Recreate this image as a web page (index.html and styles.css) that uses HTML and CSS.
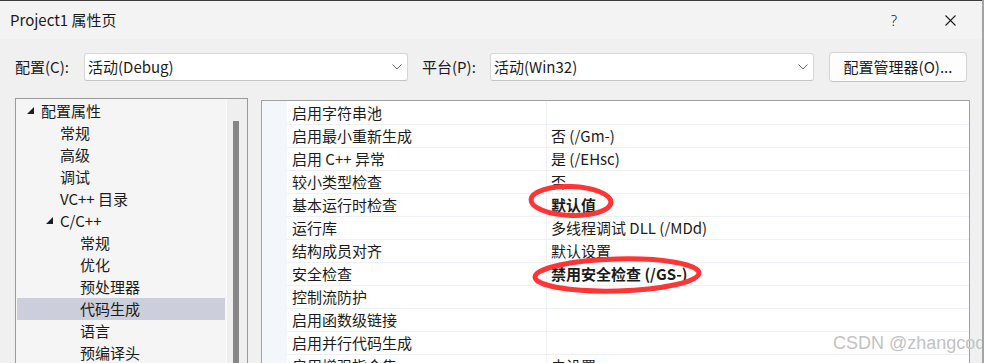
FILE: index.html
```html
<html lang="zh-CN">
<head>
<meta charset="utf-8"/>
<title>Project1 属性页</title>
<link rel="stylesheet" href="styles.css">
</head>
<body>
<div class="window">
  <div class="topline"></div>

  <div class="titlebar">
    <span class="title">Project1 属性页</span>
    <span class="help">?</span>
    <svg class="close" width="11" height="11" viewBox="0 0 11 11"><path d="M0.5 0.5 L10.5 10.5 M10.5 0.5 L0.5 10.5" stroke="#1e1e1e" stroke-width="1.1" fill="none"/></svg>
  </div>

  <div class="config">
    <label class="cfg-label">配置(C):</label>
    <div class="combo">
      <span>活动(Debug)</span>
      <svg class="chevron" width="10" height="6" viewBox="0 0 10 6"><path d="M0.5 0.5 L5 5 L9.5 0.5" stroke="#6a6a6a" stroke-width="1" fill="none"/></svg>
    </div>
    <label class="cfg-label plat">平台(P):</label>
    <div class="combo">
      <span>活动(Win32)</span>
      <svg class="chevron" width="10" height="6" viewBox="0 0 10 6"><path d="M0.5 0.5 L5 5 L9.5 0.5" stroke="#6a6a6a" stroke-width="1" fill="none"/></svg>
    </div>
    <button class="manager">配置管理器(O)...</button>
  </div>

  <div class="main">
    <div class="tree-panel">
      <div class="tree">
        <div class="node lv0"><svg class="tri" width="7" height="7" viewBox="0 0 7 7"><polygon points="7,0 7,7 0,7" fill="#1e1e1e"/></svg>配置属性</div>
        <div class="node lv1">常规</div>
        <div class="node lv1">高级</div>
        <div class="node lv1">调试</div>
        <div class="node lv1">VC++ 目录</div>
        <div class="node lv1 open"><svg class="tri" width="7" height="7" viewBox="0 0 7 7"><polygon points="7,0 7,7 0,7" fill="#1e1e1e"/></svg>C/C++</div>
        <div class="node lv2">常规</div>
        <div class="node lv2">优化</div>
        <div class="node lv2">预处理器</div>
        <div class="node lv2 selected">代码生成</div>
        <div class="node lv2">语言</div>
        <div class="node lv2">预编译头</div>
      </div>
      <div class="scrollbar"><div class="thumb"></div></div>
    </div>

    <div class="grid-panel">
      <div class="gutter"></div>
      <div class="props">
        <div class="row"><div class="name">启用字符串池</div><div class="value"></div></div>
        <div class="row"><div class="name">启用最小重新生成</div><div class="value">否 (/Gm-)</div></div>
        <div class="row"><div class="name">启用 C++ 异常</div><div class="value">是 (/EHsc)</div></div>
        <div class="row"><div class="name">较小类型检查</div><div class="value">否</div></div>
        <div class="row"><div class="name">基本运行时检查</div><div class="value bold">默认值</div></div>
        <div class="row"><div class="name">运行库</div><div class="value">多线程调试 DLL (/MDd)</div></div>
        <div class="row"><div class="name">结构成员对齐</div><div class="value">默认设置</div></div>
        <div class="row"><div class="name">安全检查</div><div class="value bold">禁用安全检查 (/GS-)</div></div>
        <div class="row"><div class="name">控制流防护</div><div class="value"></div></div>
        <div class="row"><div class="name">启用函数级链接</div><div class="value"></div></div>
        <div class="row"><div class="name">启用并行代码生成</div><div class="value"></div></div>
        <div class="row"><div class="name">启用增强指令集</div><div class="value">未设置</div></div>
      </div>
    </div>
  </div>

  <!-- hand-drawn annotation marks -->
  <svg class="marks" width="984" height="363" viewBox="0 0 984 363">
    <ellipse cx="571" cy="201" rx="40" ry="14.5" transform="rotate(2 571 201)" fill="none" stroke="#ff3434" stroke-width="5"/>
    <ellipse cx="617" cy="275" rx="82" ry="16" transform="rotate(-1.5 617 275)" fill="none" stroke="#ff3434" stroke-width="5"/>
  </svg>

  <div class="watermark">CSDN @zhangcod</div>
</div>
</body>
</html>
```

FILE: styles.css
```css
body {
  margin: 0;
  font: 15px "Noto Sans CJK SC", "Noto Sans", sans-serif;
  color: #1b1b1b;
  background: #f0f0f0;
}
.window {
  position: relative;
  width: 984px;
  height: 363px;
  overflow: hidden;
  box-sizing: border-box;
  border-right: 2px solid #a4a4a4;
  background: #f0f0f0;
}
.topline {
  height: 1px;
  background: #3b3b3b;
}
.titlebar {
  height: 38px;
  display: flex;
  align-items: center;
  padding-left: 10px;
  background: #f3f3f3;
}
.title {
  line-height: 20px;
}
.help {
  margin-left: auto;
  width: 14px;
  text-align: center;
  font-family: "Noto Sans", sans-serif;
  font-weight: 300;
  line-height: 20px;
}
.close {
  margin-left: 44px;
  margin-right: 26px;
}

/* configuration row */
.config {
  margin-top: 13px;
  height: 30px;
  display: flex;
  align-items: center;
  padding-left: 15px;
}
.cfg-label {
  width: 69px;
  line-height: 20px;
}
.cfg-label.plat {
  margin-left: 14px;
  width: 68px;
}
.combo {
  width: 324px;
  height: 28px;
  box-sizing: border-box;
  display: flex;
  align-items: center;
  padding-left: 3px;
  background: #fff;
  border: 1px solid #d6d6d6;
  border-bottom-color: #c4c4c4;
  border-radius: 3px;
  line-height: 20px;
}
.chevron {
  margin-left: auto;
  margin-right: 5px;
}
.manager {
  margin-left: 15px;
  width: 138px;
  height: 30px;
  font: inherit;
  color: inherit;
  line-height: 20px;
  background: #fdfdfd;
  border: 1px solid #d3d3d3;
  border-bottom-color: #c2c2c2;
  border-radius: 4px;
  padding: 0;
}

/* tree and property grid */
.main {
  margin-top: 16px;
  display: flex;
  align-items: flex-start;
  padding-left: 15px;
}
.tree-panel {
  width: 233px;
  height: 300px;
  box-sizing: border-box;
  border: 1px solid #9a9a9a;
  background: #f5f5f5;
  display: flex;
}
.tree {
  width: 210px;
  padding: 1px 1px 0 1px;
  box-sizing: border-box;
}
.node {
  height: 22px;
  line-height: 22px;
  display: flex;
  align-items: center;
  white-space: nowrap;
}
.node .tri {
  margin-top: -2px;
}
.lv0 {
  padding-left: 10px;
}
.lv0 .tri {
  margin-right: 7px;
}
.lv1 {
  padding-left: 43px;
}
.lv1.open {
  padding-left: 29px;
}
.lv1.open .tri {
  margin-right: 7px;
}
.lv2 {
  padding-left: 63px;
}
.selected {
  background: #cccedb;
}
.scrollbar {
  width: 21px;
  height: 100%;
  box-sizing: border-box;
  border-left: 1px solid #fafafa;
  background: #efefef;
  padding: 22px 0 0 6px;
}
.thumb {
  width: 6px;
  height: 260px;
  background: #868686;
}
.grid-panel {
  margin-left: 13px;
  margin-top: 2px;
  width: 709px;
  height: 300px;
  box-sizing: border-box;
  border: 1px solid #a0a0a0;
  background: #fff;
  display: flex;
}
.gutter {
  width: 25px;
  background: #f3f6fb;
}
.props {
  flex: 1;
  padding-top: 1px;
}
.row {
  height: 23px;
  box-sizing: border-box;
  border-bottom: 1px solid #eef0f7;
  display: grid;
  grid-template-columns: 259px 1fr;
}
.name {
  padding-left: 5px;
  line-height: 22px;
  white-space: nowrap;
}
.value {
  padding-left: 4px;
  line-height: 22px;
  border-left: 1px solid #eef0f5;
  white-space: nowrap;
}
.bold {
  font-weight: bold;
}
.marks {
  position: absolute;
  left: 0;
  top: 0;
  pointer-events: none;
}
.watermark {
  position: absolute;
  left: 833px;
  top: 333px;
  font: 18px "Liberation Sans", sans-serif;
  color: #c2c2c2;
  text-shadow: 0 0 1px #ffffff;
  white-space: nowrap;
}
```
